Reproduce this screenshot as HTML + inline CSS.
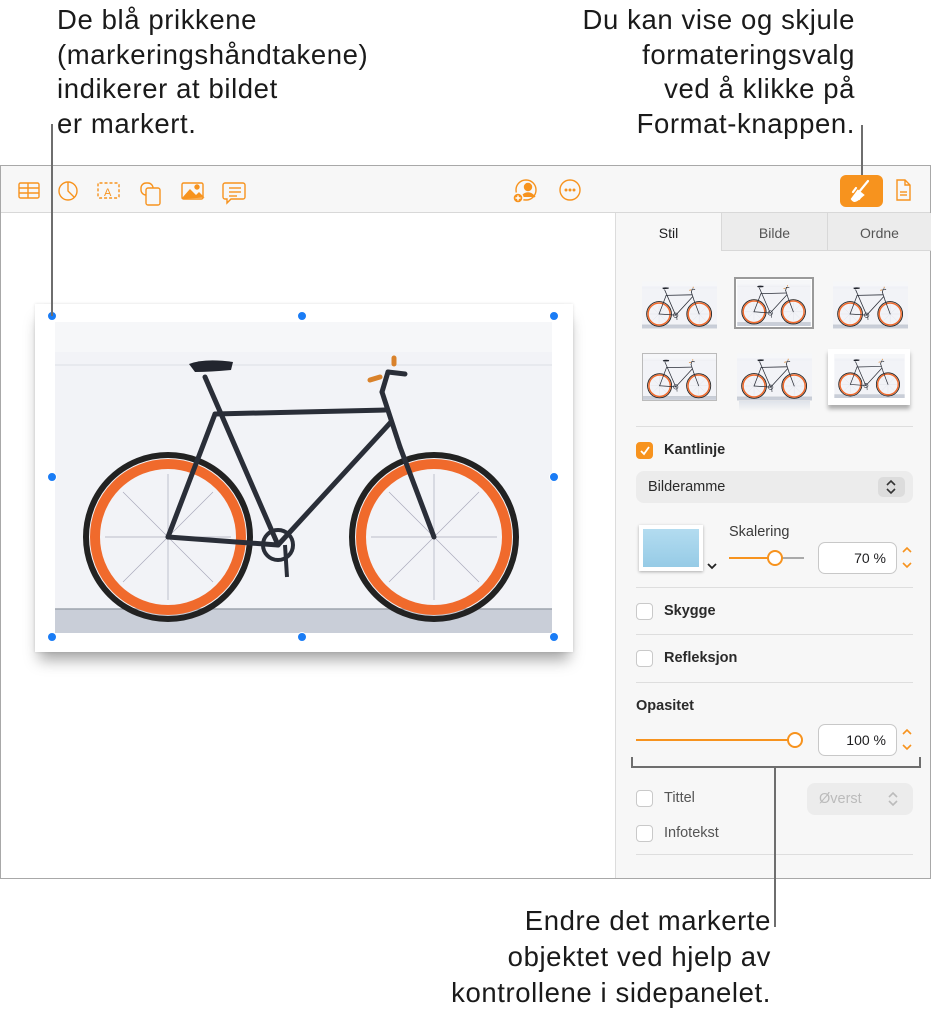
<!DOCTYPE html>
<html><head><meta charset="utf-8">
<style>
*{margin:0;padding:0;box-sizing:border-box}
body{width:931px;height:1016px;background:#fff;position:relative;overflow:hidden;font-family:"Liberation Sans",sans-serif;color:#1d1d1f}
.ann{position:absolute;font-size:27.5px;line-height:34.5px;color:#1a1a1a;white-space:nowrap;letter-spacing:0.6px}
.ln{position:absolute;background:#6e6e6e}
.win{position:absolute;left:0;top:165px;width:931px;height:714px;border:1px solid #a8a8a8;background:#fff}
.tb{position:absolute;left:0;top:0;width:929px;height:47px;background:#f7f7f7;border-bottom:1px solid #d8d8d8}
.side{position:absolute;left:614px;top:47px;width:315px;height:665px;background:#f7f7f7;border-left:1px solid #dcdcdc}
.tab{position:absolute;top:0;height:38px;font-size:14px;line-height:40px;text-align:center;color:#555}
.sep{position:absolute;left:20px;width:277px;height:1px;background:#dedede}
.cb{position:absolute;left:20px;width:17px;height:17px;border:1px solid #c9c9c9;border-radius:4px;background:#fff}
.lbl{position:absolute;left:48px;font-size:14.5px;font-weight:bold;color:#2a2a2a}
.box{position:absolute;background:#fff;border:1px solid #c8c8c8;border-radius:7px;font-size:14px;text-align:right;padding-right:10px;line-height:30px;height:32px}
.h{position:absolute;width:10px;height:10px;border-radius:50%;background:#1a7cf5;border:1px solid #fff}
</style></head><body>
<svg width="0" height="0" style="position:absolute">
<defs>
<symbol id="bike" viewBox="0 0 497 311">
<rect width="497" height="311" fill="#f2f3f7"/>
<rect y="0" width="497" height="30" fill="#f6f7f9"/>
<line x1="0" y1="43" x2="497" y2="43" stroke="#dcdfe5" stroke-width="1"/>
<rect y="287" width="497" height="24" fill="#c9ced8"/>
<line x1="0" y1="287" x2="497" y2="287" stroke="#9ea4ae" stroke-width="1.5"/>
<g fill="none">
<circle cx="113" cy="215" r="82" stroke="#222" stroke-width="6"/>
<circle cx="113" cy="215" r="73" stroke="#f06a2c" stroke-width="10"/>
<circle cx="379" cy="215" r="82" stroke="#222" stroke-width="6"/>
<circle cx="379" cy="215" r="73" stroke="#f06a2c" stroke-width="10"/>
<g stroke="#aab" stroke-width="0.7">
<line x1="50" y1="215" x2="176" y2="215"/><line x1="113" y1="152" x2="113" y2="278"/>
<line x1="68" y1="170" x2="158" y2="260"/><line x1="68" y1="260" x2="158" y2="170"/>
<line x1="316" y1="215" x2="442" y2="215"/><line x1="379" y1="152" x2="379" y2="278"/>
<line x1="334" y1="170" x2="424" y2="260"/><line x1="334" y1="260" x2="424" y2="170"/>
</g>
<g stroke="#2a2e38" stroke-width="5" stroke-linecap="round">
<line x1="113" y1="215" x2="160" y2="92"/>
<line x1="113" y1="215" x2="223" y2="223"/>
<line x1="160" y1="92" x2="330" y2="88"/>
<line x1="150" y1="55" x2="223" y2="223"/>
<line x1="336" y1="100" x2="223" y2="223"/>
<line x1="327" y1="70" x2="345" y2="125"/>
<line x1="345" y1="125" x2="379" y2="215"/>
<line x1="327" y1="70" x2="333" y2="50"/>
<line x1="333" y1="50" x2="350" y2="52"/>
</g>
<path d="M134 42 Q150 36 178 40 L176 48 Q155 50 140 50 Z" fill="#22252e"/>
<circle cx="223" cy="223" r="15" stroke="#2a2e38" stroke-width="4"/>
<line x1="230" y1="223" x2="232" y2="255" stroke="#2a2e38" stroke-width="4"/>
<line x1="315" y1="58" x2="325" y2="55" stroke="#d9822b" stroke-width="5" stroke-linecap="round"/>
<line x1="339" y1="42" x2="339" y2="36" stroke="#d9822b" stroke-width="5" stroke-linecap="round"/>
</g>
</symbol>
</defs>
</svg>

<div class="ann" style="left:57px;top:3px">De blå prikkene<br>(markeringshåndtakene)<br>indikerer at bildet<br>er markert.</div>
<div class="ann" style="right:76px;top:3px;text-align:right">Du kan vise og skjule<br>formateringsvalg<br>ved å klikke på<br>Format-knappen.</div>
<div class="ann" style="right:160px;top:903px;text-align:right;line-height:36px">Endre det markerte<br>objektet ved hjelp av<br>kontrollene i sidepanelet.</div>

<div class="win">
 <div class="tb">
  <svg width="929" height="47" style="position:absolute;left:0;top:0" fill="none" stroke="#f7931e" stroke-width="1.4">
   <rect x="18" y="17" width="20" height="15" rx="1.5"/><line x1="18" y1="22" x2="38" y2="22"/><line x1="18" y1="27" x2="38" y2="27"/><line x1="27" y1="17" x2="27" y2="32"/>
   <circle cx="67" cy="25" r="9"/><path d="M67 16 V25 L73 31"/>
   <rect x="97" y="17" width="21" height="15" rx="1.5" stroke-dasharray="3 2"/><text x="103" y="30" font-size="11" fill="#f7931e" stroke="none" font-family="Liberation Sans">A</text>
   <rect x="140" y="17" width="12" height="12" rx="5"/><rect x="145" y="22" width="14" height="17" rx="2" fill="#f7f7f7"/>
   <rect x="181" y="17" width="21" height="16" rx="1.5"/><path d="M182 32 L189 24 L195 30 L198 27 L202 31 Z" fill="#f7931e"/><circle cx="196" cy="21" r="2" fill="#f7931e"/>
   <path d="M224 17 h18 a2 2 0 0 1 2 2 v12 a2 2 0 0 1-2 2 h-12 l-4 4 v-4 h-2 a2 2 0 0 1-2-2 v-12 a2 2 0 0 1 2-2z"/><line x1="228" y1="22" x2="240" y2="22"/><line x1="228" y1="26" x2="240" y2="26"/><line x1="228" y1="30" x2="236" y2="30"/>
   <circle cx="525" cy="24" r="10"/><circle cx="527" cy="21" r="3.5" fill="#f7931e"/><path d="M520 31 q7-8 14 0" fill="#f7931e"/><circle cx="517" cy="32" r="5" fill="#f7931e" stroke="#f7f7f7"/><path d="M514.5 32h5M517 29.5v5" stroke="#fff"/>
   <circle cx="569" cy="24" r="10"/><circle cx="565" cy="24" r="0.8" fill="#f7931e"/><circle cx="569" cy="24" r="0.8" fill="#f7931e"/><circle cx="573" cy="24" r="0.8" fill="#f7931e"/>
   <path d="M896 14 h8 l5 5 v15 h-13 z"/><path d="M904 14 v5 h5"/><line x1="899" y1="26" x2="906" y2="26"/><line x1="899" y1="29" x2="906" y2="29"/>
  </svg>
  <div style="position:absolute;left:839px;top:9px;width:43px;height:32px;background:#f7931e;border-radius:6px"></div>
  <svg width="43" height="32" style="position:absolute;left:839px;top:9px" fill="none" stroke="#fff" stroke-width="2.2" stroke-linecap="round"><path d="M28 6 L19 17"/><path d="M18 16 l5 4 l-6 5 q-3 2-5 -1 z" fill="#fff"/><path d="M16 13 l-3 4 M22 20 l-3 4"/></svg>
 </div>
 <div class="ln" style="left:860px;top:-41px;width:2px;height:50px"></div>

 <div style="position:absolute;left:34px;top:138px;width:538px;height:348px;background:#fff;box-shadow:0 12px 14px -4px rgba(0,0,0,0.35),0 0 3px rgba(0,0,0,0.12)"></div>
 <svg style="position:absolute;left:54px;top:156px" width="497" height="311"><use href="#bike"/></svg>
 <div class="h" style="left:46px;top:145px"></div><div class="h" style="left:296px;top:145px"></div><div class="h" style="left:548px;top:145px"></div>
 <div class="h" style="left:46px;top:306px"></div><div class="h" style="left:548px;top:306px"></div>
 <div class="h" style="left:46px;top:466px"></div><div class="h" style="left:296px;top:466px"></div><div class="h" style="left:548px;top:466px"></div>

 <div class="side">
  <div class="tab" style="left:0;width:105px;color:#1d1d1f;background:#f7f7f7">Stil</div>
  <div class="tab" style="left:105px;width:106px;background:#ececec;border-left:1px solid #d8d8d8;border-bottom:1px solid #d8d8d8">Bilde</div>
  <div class="tab" style="left:211px;width:104px;background:#ececec;border-left:1px solid #d8d8d8;border-bottom:1px solid #d8d8d8">Ordne</div>

  <svg style="position:absolute;left:26px;top:68px" width="75" height="48"><use href="#bike"/></svg>
  <div style="position:absolute;left:118px;top:64px;width:80px;height:52px;border:2px solid #9a9a9a;background:#fff"></div>
  <svg style="position:absolute;left:121px;top:67px" width="74" height="46"><use href="#bike"/></svg>
  <svg style="position:absolute;left:217px;top:68px" width="75" height="48"><use href="#bike"/></svg>
  <svg style="position:absolute;left:26px;top:140px;border:1px solid #bbb" width="75" height="48"><use href="#bike"/></svg>
  <svg style="position:absolute;left:121px;top:140px" width="75" height="48"><use href="#bike"/></svg>
  <div style="position:absolute;left:123px;top:188px;width:71px;height:10px;background:linear-gradient(#dfe3ea,rgba(255,255,255,0))"></div>
  <div style="position:absolute;left:212px;top:136px;width:82px;height:56px;background:#fff;box-shadow:0 4px 4px rgba(0,0,0,0.3)"></div>
  <svg style="position:absolute;left:218px;top:141px" width="71" height="44"><use href="#bike"/></svg>

  <div class="sep" style="top:213px"></div>
  <div class="cb" style="top:229px;background:#f7931e;border-color:#f7931e"></div>
  <svg style="position:absolute;left:23px;top:232px" width="12" height="12" fill="none" stroke="#fff" stroke-width="1.8"><path d="M2 6 L5 9 L10 2"/></svg>
  <div class="lbl" style="top:229px">Kantlinje</div>
  <div style="position:absolute;left:20px;top:258px;width:277px;height:32px;background:#ececec;border-radius:8px;font-size:14.5px;line-height:32px;padding-left:12px;color:#2a2a2a">Bilderamme</div>
  <div style="position:absolute;left:262px;top:264px;width:27px;height:20px;background:#dcdcdc;border-radius:5px"></div>
  <svg style="position:absolute;left:268px;top:266px" width="14" height="16" fill="none" stroke="#333" stroke-width="1.6"><path d="M3 6 L7 2 L11 6 M3 10 L7 14 L11 10"/></svg>

  <div style="position:absolute;left:23px;top:312px;width:64px;height:46px;background:#fff;box-shadow:0 1px 3px rgba(0,0,0,0.3)"></div>
  <div style="position:absolute;left:27px;top:316px;width:56px;height:38px;background:linear-gradient(#b3dcf0,#96cbe6)"></div>
  <svg style="position:absolute;left:90px;top:348px" width="12" height="10" fill="none" stroke="#222" stroke-width="1.8"><path d="M2 3 L6 7 L10 3"/></svg>
  <div style="position:absolute;left:113px;top:311px;font-size:14.5px;color:#3a3a3a">Skalering</div>
  <div style="position:absolute;left:113px;top:344px;width:46px;height:2px;background:#f7931e"></div>
  <div style="position:absolute;left:159px;top:344px;width:29px;height:2px;background:#aaa"></div>
  <div style="position:absolute;left:151px;top:337px;width:16px;height:16px;border:2px solid #f7931e;border-radius:50%;background:#fff"></div>
  <div class="box" style="left:202px;top:329px;width:79px">70 %</div>
  <svg style="position:absolute;left:284px;top:331px" width="14" height="28" fill="none" stroke="#f7931e" stroke-width="1.6"><path d="M3 8 L7 4 L11 8 M3 19 L7 23 L11 19"/></svg>

  <div class="sep" style="top:374px"></div>
  <div class="cb" style="top:390px"></div><div class="lbl" style="top:390px">Skygge</div>
  <div class="sep" style="top:421px"></div>
  <div class="cb" style="top:437px"></div><div class="lbl" style="top:437px">Refleksjon</div>
  <div class="sep" style="top:469px"></div>
  <div class="lbl" style="left:20px;top:485px">Opasitet</div>
  <div style="position:absolute;left:20px;top:526px;width:158px;height:2px;background:#f7931e"></div>
  <div style="position:absolute;left:171px;top:519px;width:16px;height:16px;border:2px solid #f7931e;border-radius:50%;background:#fff"></div>
  <div class="box" style="left:202px;top:511px;width:79px">100 %</div>
  <svg style="position:absolute;left:284px;top:513px" width="14" height="28" fill="none" stroke="#f7931e" stroke-width="1.6"><path d="M3 8 L7 4 L11 8 M3 19 L7 23 L11 19"/></svg>

  <div class="cb" style="top:577px"></div><div class="lbl" style="top:577px;font-weight:normal;color:#555">Tittel</div>
  <div style="position:absolute;left:191px;top:570px;width:106px;height:32px;background:#ececec;border-radius:8px;font-size:14.5px;line-height:32px;padding-left:12px;color:#bbb">Øverst</div>
  <svg style="position:absolute;left:270px;top:577px" width="14" height="18" fill="none" stroke="#bbb" stroke-width="1.6"><path d="M3 7 L7 3 L11 7 M3 11 L7 15 L11 11"/></svg>
  <div class="cb" style="top:612px"></div><div class="lbl" style="top:612px;font-weight:normal;color:#555">Infotekst</div>
  <div class="sep" style="top:641px"></div>
 </div>
</div>

<div class="ln" style="left:51px;top:124px;width:2px;height:192px"></div>
<div class="ln" style="left:631px;top:766px;width:290px;height:2px"></div>
<div class="ln" style="left:631px;top:757px;width:2px;height:10px"></div>
<div class="ln" style="left:919px;top:757px;width:2px;height:10px"></div>
<div class="ln" style="left:774px;top:767px;width:2px;height:160px"></div>
</body></html>
